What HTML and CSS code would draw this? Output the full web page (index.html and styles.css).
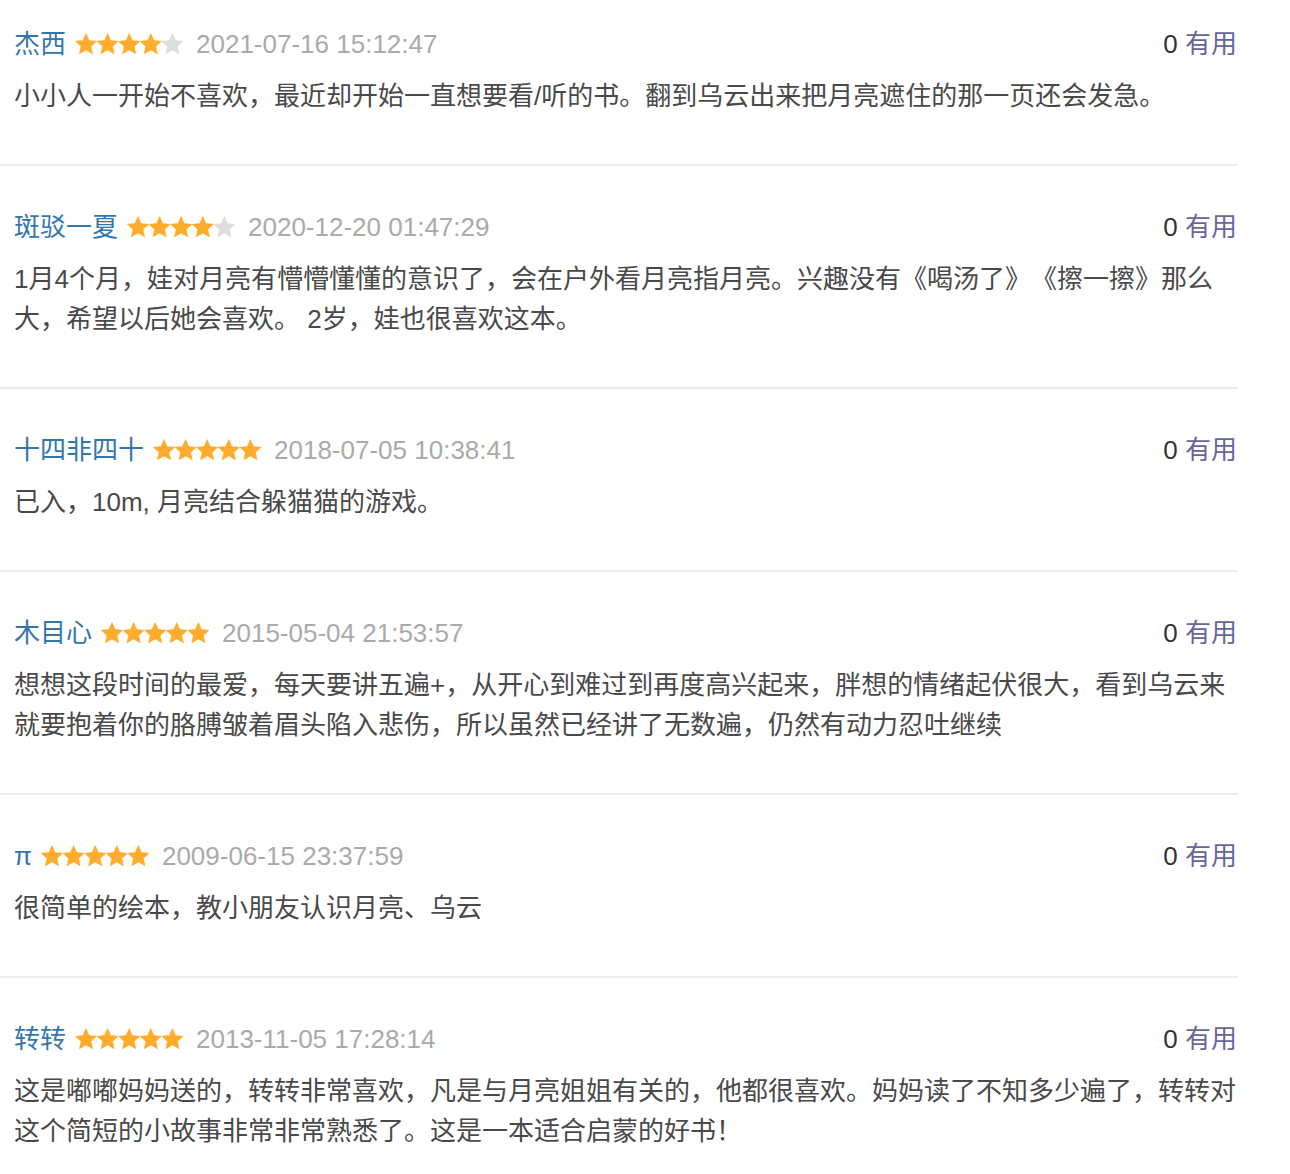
FILE: index.html
```html
<!DOCTYPE html>
<html lang="zh-CN">
<head>
<meta charset="utf-8">
<title>短评</title>
<link rel="stylesheet" href="styles.css">
</head>
<body>
<svg width="0" height="0" class="defs" aria-hidden="true">
  <defs>
    <symbol id="star" viewBox="0 0 22 22">
      <polygon points="11,0.6 14.1,7.6 21.6,8.3 16,13.4 17.6,20.8 11,17 4.4,20.8 6,13.4 0.4,8.3 7.9,7.6"/>
    </symbol>
  </defs>
</svg>
<div class="comments">
  <div class="comment">
    <div class="meta">
      <a class="name">杰西</a>
      <svg class="stars" viewBox="0 0 108 22"><use href="#star" x="0" width="22" height="22" class="on"/><use href="#star" x="21.6" width="22" height="22" class="on"/><use href="#star" x="43.2" width="22" height="22" class="on"/><use href="#star" x="64.8" width="22" height="22" class="on"/><use href="#star" x="86.4" width="22" height="22" class="off"/></svg>
      <span class="time">2021-07-16 15:12:47</span>
      <span class="vote"><span class="count">0</span> <a class="useful">有用</a></span>
    </div>
    <p class="content">小小人一开始不喜欢，最近却开始一直想要看/听的书。翻到乌云出来把月亮遮住的那一页还会发急。</p>
  </div>
  <div class="comment">
    <div class="meta">
      <a class="name">斑驳一夏</a>
      <svg class="stars" viewBox="0 0 108 22"><use href="#star" x="0" width="22" height="22" class="on"/><use href="#star" x="21.6" width="22" height="22" class="on"/><use href="#star" x="43.2" width="22" height="22" class="on"/><use href="#star" x="64.8" width="22" height="22" class="on"/><use href="#star" x="86.4" width="22" height="22" class="off"/></svg>
      <span class="time">2020-12-20 01:47:29</span>
      <span class="vote"><span class="count">0</span> <a class="useful">有用</a></span>
    </div>
    <p class="content">1月4个月，娃对月亮有懵懵懂懂的意识了，会在户外看月亮指月亮。兴趣没有《喝汤了》《擦一擦》那么大，希望以后她会喜欢。 2岁，娃也很喜欢这本。</p>
  </div>
  <div class="comment">
    <div class="meta">
      <a class="name">十四非四十</a>
      <svg class="stars" viewBox="0 0 108 22"><use href="#star" x="0" width="22" height="22" class="on"/><use href="#star" x="21.6" width="22" height="22" class="on"/><use href="#star" x="43.2" width="22" height="22" class="on"/><use href="#star" x="64.8" width="22" height="22" class="on"/><use href="#star" x="86.4" width="22" height="22" class="on"/></svg>
      <span class="time">2018-07-05 10:38:41</span>
      <span class="vote"><span class="count">0</span> <a class="useful">有用</a></span>
    </div>
    <p class="content">已入，10m, 月亮结合躲猫猫的游戏。</p>
  </div>
  <div class="comment">
    <div class="meta">
      <a class="name">木目心</a>
      <svg class="stars" viewBox="0 0 108 22"><use href="#star" x="0" width="22" height="22" class="on"/><use href="#star" x="21.6" width="22" height="22" class="on"/><use href="#star" x="43.2" width="22" height="22" class="on"/><use href="#star" x="64.8" width="22" height="22" class="on"/><use href="#star" x="86.4" width="22" height="22" class="on"/></svg>
      <span class="time">2015-05-04 21:53:57</span>
      <span class="vote"><span class="count">0</span> <a class="useful">有用</a></span>
    </div>
    <p class="content">想想这段时间的最爱，每天要讲五遍+，从开心到难过到再度高兴起来，胖想的情绪起伏很大，看到乌云来就要抱着你的胳膊皱着眉头陷入悲伤，所以虽然已经讲了无数遍，仍然有动力忍吐继续</p>
  </div>
  <div class="comment">
    <div class="meta">
      <a class="name">π</a>
      <svg class="stars" viewBox="0 0 108 22"><use href="#star" x="0" width="22" height="22" class="on"/><use href="#star" x="21.6" width="22" height="22" class="on"/><use href="#star" x="43.2" width="22" height="22" class="on"/><use href="#star" x="64.8" width="22" height="22" class="on"/><use href="#star" x="86.4" width="22" height="22" class="on"/></svg>
      <span class="time">2009-06-15 23:37:59</span>
      <span class="vote"><span class="count">0</span> <a class="useful">有用</a></span>
    </div>
    <p class="content">很简单的绘本，教小朋友认识月亮、乌云</p>
  </div>
  <div class="comment">
    <div class="meta">
      <a class="name">转转</a>
      <svg class="stars" viewBox="0 0 108 22"><use href="#star" x="0" width="22" height="22" class="on"/><use href="#star" x="21.6" width="22" height="22" class="on"/><use href="#star" x="43.2" width="22" height="22" class="on"/><use href="#star" x="64.8" width="22" height="22" class="on"/><use href="#star" x="86.4" width="22" height="22" class="on"/></svg>
      <span class="time">2013-11-05 17:28:14</span>
      <span class="vote"><span class="count">0</span> <a class="useful">有用</a></span>
    </div>
    <p class="content">这是嘟嘟妈妈送的，转转非常喜欢，凡是与月亮姐姐有关的，他都很喜欢。妈妈读了不知多少遍了，转转对这个简短的小故事非常非常熟悉了。这是一本适合启蒙的好书！</p>
  </div>
</div>
</body>
</html>
```

FILE: styles.css
```css
html, body {
  margin: 0;
  padding: 0;
  background: #fff;
}

body {
  font-family: "Liberation Sans", "Noto Sans CJK SC", sans-serif;
  font-size: 26px;
  color: #494949;
  text-spacing-trim: space-all;
}

.defs {
  position: absolute;
  width: 0;
  height: 0;
  overflow: hidden;
}

.comments {
  width: 1238px;
}

.comment {
  padding: 41px 0 48px 14px;
  border-bottom: 2px solid #ececec;
}

.comment:first-child {
  padding-top: 24px;
}

.comment:last-child {
  border-bottom: none;
}

.meta {
  display: flex;
  align-items: center;
  height: 40px;
  line-height: 40px;
  white-space: nowrap;
}

.name {
  color: #3377aa;
  text-decoration: none;
}

.stars {
  width: 108px;
  height: 22px;
  margin-left: 9px;
  margin-right: 13px;
  flex: none;
}

.stars .on {
  fill: #ffac2d;
  stroke: #ffac2d;
  stroke-width: 0.6;
  stroke-linejoin: round;
}

.stars .off {
  fill: #dddddd;
  stroke: #dddddd;
  stroke-width: 0.6;
  stroke-linejoin: round;
}

.time {
  color: #aaaaaa;
}

.vote {
  margin-left: auto;
  margin-right: 1px;
}

.count {
  color: #333333;
}

.useful {
  color: #666699;
  text-decoration: none;
}

.content {
  margin: 12px 0 0;
  line-height: 40px;
  color: #494949;
}
```
